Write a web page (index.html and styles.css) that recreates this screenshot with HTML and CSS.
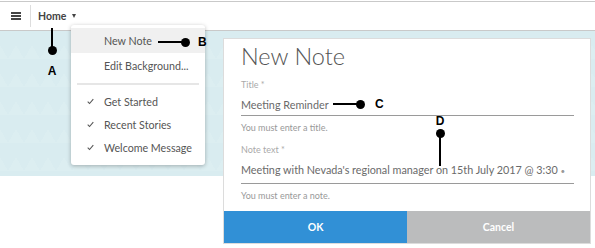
FILE: index.html
```html
<!DOCTYPE html>
<html>
<head>
  <title>New Note</title>
  <link rel="stylesheet" href="styles.css">
</head>
<body>
  <header class="topbar">
    <span class="hamburger"><i></i><i></i><i></i></span>
    <span class="divider"></span>
    <span class="home">Home <span class="caret"></span></span>
  </header>

  <main class="stage">
    <div class="backdrop"></div>

    <!-- dropdown under Home -->
    <ul class="menu">
      <li class="item active">New Note</li>
      <li class="item">Edit Background...</li>
      <li class="sep"></li>
      <li class="item checked"><svg viewBox="0 0 8 7"><polyline points="0.8,3.6 2.9,5.8 7.2,0.8"/></svg>Get Started</li>
      <li class="item checked"><svg viewBox="0 0 8 7"><polyline points="0.8,3.6 2.9,5.8 7.2,0.8"/></svg>Recent Stories</li>
      <li class="item checked"><svg viewBox="0 0 8 7"><polyline points="0.8,3.6 2.9,5.8 7.2,0.8"/></svg>Welcome Message</li>
    </ul>

    <!-- modal -->
    <div class="dialog">
      <div class="dialog-body">
        <h1>New Note</h1>
        <div class="field">
          <label>Title *</label>
          <div class="value">Meeting Reminder</div>
          <p class="hint">You must enter a title.</p>
        </div>
        <div class="field note">
          <label>Note text *</label>
          <div class="value">Meeting with Nevada's regional manager on 15th July 2017 @ 3:30 <span class="bullet">•</span></div>
          <p class="hint">You must enter a note.</p>
        </div>
      </div>
      <div class="actions">
        <button class="ok">OK</button>
        <button class="cancel">Cancel</button>
      </div>
    </div>
  </main>

  <!-- callouts -->
  <div class="callout callout-a"><span class="stem"></span><span class="dot"></span><b>A</b></div>
  <div class="callout callout-b"><span class="stem"></span><span class="dot"></span><b>B</b></div>
  <div class="callout callout-c"><span class="stem"></span><span class="dot"></span><b>C</b></div>
  <div class="callout callout-d"><b>D</b><span class="dot"></span><span class="stem"></span></div>
</body>
</html>
```

FILE: styles.css
```css
* {
  margin: 0;
  padding: 0;
  box-sizing: border-box;
}

body {
  font-family: Lato, 'Open Sans', sans-serif;
  background: #fff;
  color: #555;
  width: 595px;
  height: 248px;
  overflow: hidden;
  position: relative;
}

.topbar {
  margin-top: 1px;
  height: 30px;
  border-top: 1px solid #c9c9c9;
  border-bottom: 1px solid #c9c9c9;
  display: flex;
  align-items: center;
}

.hamburger {
  display: flex;
  flex-direction: column;
  gap: 1px;
  margin-left: 11px;
}

.hamburger i {
  display: block;
  width: 10px;
  height: 2px;
  background: #444;
}

.divider {
  width: 1px;
  height: 22px;
  background: #ddd;
  margin-left: 9px;
}

.home {
  margin-left: 7px;
  font-size: 10.5px;
  font-weight: 700;
  color: #444;
  display: flex;
  align-items: center;
}

.caret {
  margin-left: 6px;
  border-left: 2.5px solid transparent;
  border-right: 2.5px solid transparent;
  border-top: 4px solid #444;
}

.stage {
  position: relative;
}

.backdrop {
  height: 145px;
  background-color: #d9ecf0;
  background-image:
    linear-gradient(60deg, rgba(255,255,255,0.09) 25%, transparent 25%),
    linear-gradient(-60deg, rgba(255,255,255,0.09) 25%, transparent 25%);
  background-size: 16px 28px;
}

.menu {
  position: absolute;
  left: 71px;
  top: -6px;
  width: 134px;
  padding: 3px 0 6px;
  list-style: none;
  background: #fff;
  border-radius: 3px;
  box-shadow: 0 1px 4px rgba(0, 0, 0, 0.28);
  font-size: 10.7px;
  color: #555;
}

.item {
  height: 24px;
  padding-left: 33px;
  display: flex;
  align-items: center;
}

.item.active {
  height: 25px;
  background: #f0f0f0;
}

.item.checked {
  height: 23px;
  padding-left: 16px;
}

.item svg {
  width: 7px;
  height: 7px;
  margin-right: 10px;
  fill: none;
  stroke: #555;
  stroke-width: 1.2;
}

.sep {
  height: 2px;
  background: #e6e6e6;
  margin: 6px 6px 5px;
}

.dialog {
  position: absolute;
  left: 223px;
  top: 7px;
  width: 368px;
  height: 206px;
  background: #fff;
  border: 1px solid #dcdcdc;
  display: flex;
  flex-direction: column;
}

.dialog-body {
  flex: 1;
  padding: 4px 16px 0 17px;
}

.dialog h1 {
  font-size: 23.5px;
  font-weight: 300;
  color: #555;
  line-height: 27px;
}

.field label {
  display: block;
  font-size: 9px;
  color: #aaa;
  line-height: 12px;
  margin-top: 10px;
}

.field:first-of-type label {
  margin-top: 9px;
}

.value {
  font-size: 10.8px;
  color: #6a6a6a;
  line-height: 14px;
  padding: 7px 0 3px;
  border-bottom: 1px solid #9a9a9a;
}

.note .value {
  padding-bottom: 5px;
}

.bullet {
  color: #999;
  font-size: 8px;
}

.hint {
  font-size: 9px;
  color: #999;
  line-height: 12px;
  margin-top: 6px;
}

.actions {
  display: flex;
  height: 32px;
}

.actions button {
  flex: 1;
  border: none;
  color: #fff;
  font-family: Lato, 'Open Sans', sans-serif;
  font-size: 10.5px;
  font-weight: 700;
}

.actions .ok {
  background: #3190d6;
}

.actions .cancel {
  background: #bbbcbd;
}

/* annotation callouts */
.callout {
  position: absolute;
  display: flex;
  align-items: center;
}

.callout b {
  font-family: 'Liberation Sans', Arial, sans-serif;
  font-size: 12px;
  font-weight: 700;
  color: #000;
}

.dot {
  width: 9px;
  height: 9px;
  border-radius: 50%;
  background: #000;
}

.stem {
  background: #000;
}

.callout-a {
  left: 46px;
  top: 28px;
  width: 12px;
  flex-direction: column;
}

.callout-a .stem {
  width: 2px;
  height: 20px;
}

.callout-a .dot {
  margin-top: -2px;
}

.callout-a b {
  margin-top: 9px;
}

.callout-b {
  left: 158px;
  top: 35px;
}

.callout-c {
  left: 333px;
  top: 97px;
}

.callout-b .stem,
.callout-c .stem {
  width: 25px;
  height: 2px;
}

.callout-b .dot,
.callout-c .dot {
  margin-left: -2px;
}

.callout-b b {
  margin-left: 8px;
}

.callout-c b {
  margin-left: 10px;
}

.callout-d {
  left: 434px;
  top: 114px;
  width: 12px;
  flex-direction: column;
}

.callout-d .dot {
  margin-top: 1px;
}

.callout-d .stem {
  width: 2px;
  height: 30px;
  margin-top: -2px;
}
```
